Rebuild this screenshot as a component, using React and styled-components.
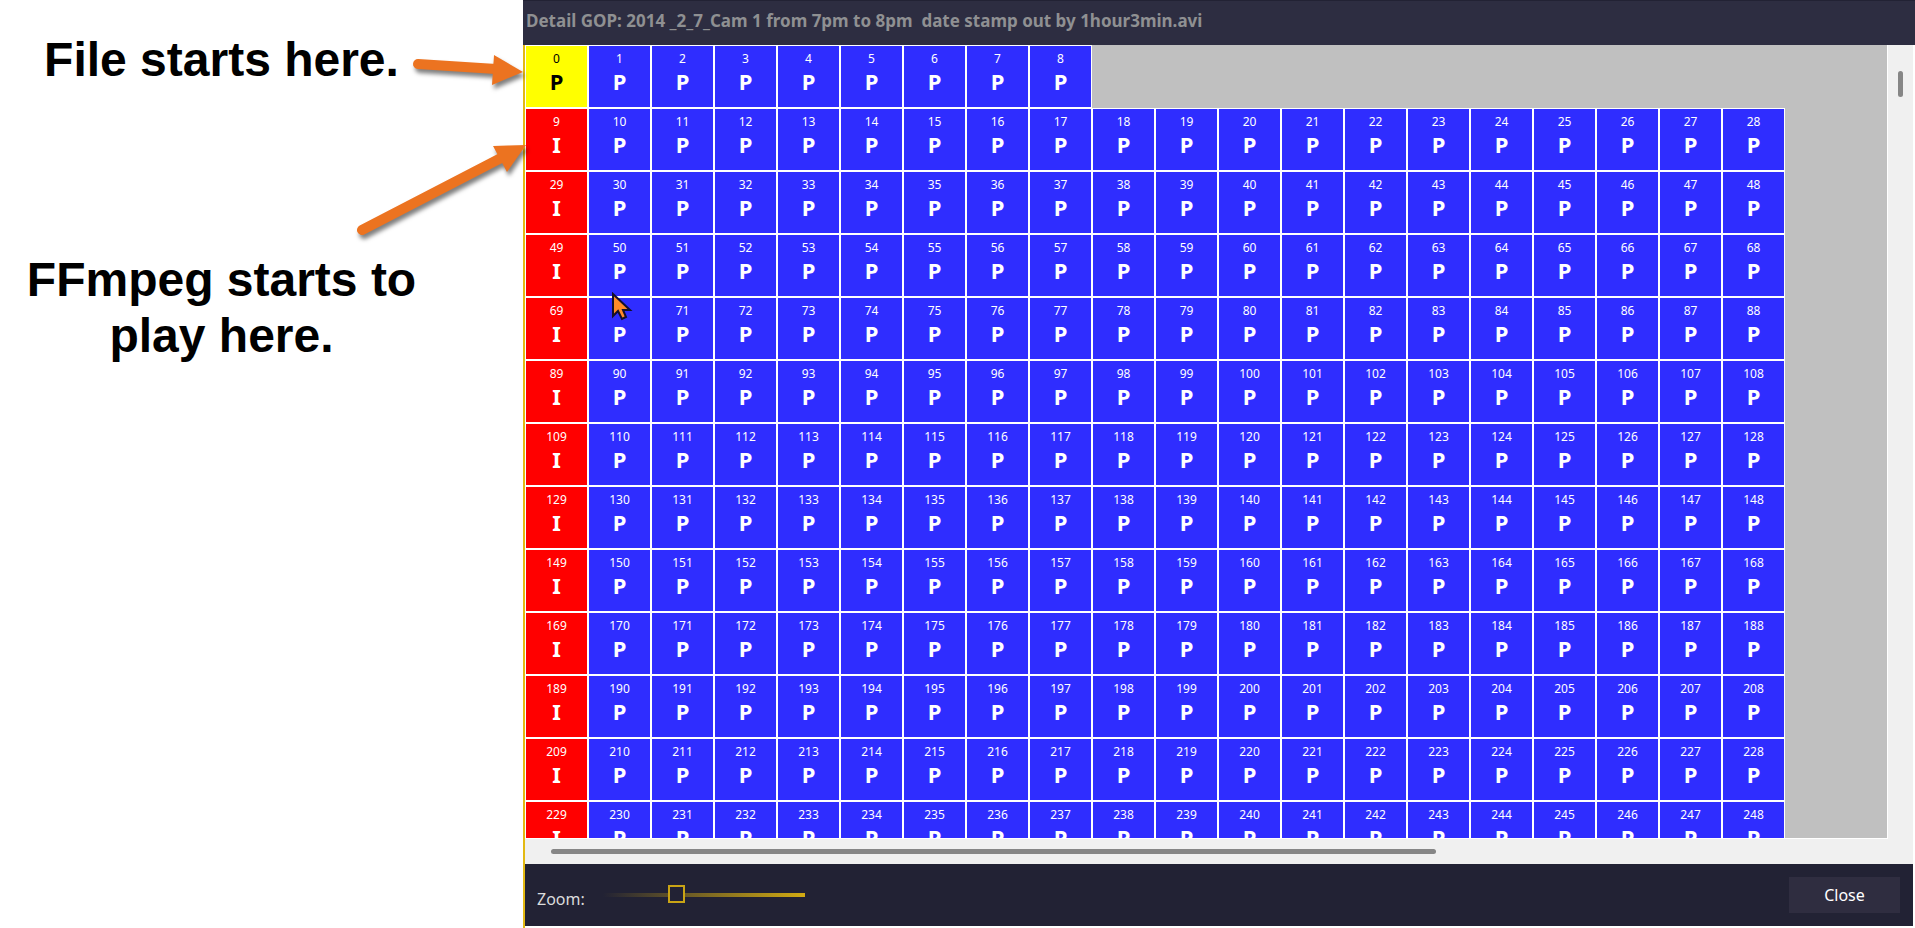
/**
 * -=-=-=-=-=-=-=-=-=-=-=-=-=-=-=-=-=-=-=-=-=-=-=-=-=-=-=-=
 * GOP detail dialog with annotations
 * -=-=-=-=-=-=-=-=-=-=-=-=-=-=-=-=-=-=-=-=-=-=-=-=-=-=-=-=
 */
import React, { useState } from 'react'
import styled, { createGlobalStyle } from 'styled-components'


const FIRST_GOP_LENGTH = 9
const GOP_LENGTH = 20
const GOP_COUNT = 13

// frame whose number sits under the mouse pointer
const HOVERED_FRAME = 70

const buildRow = (start, length) =>
  Array.from({ length }, (_, i) => {
    const number = start + i

    return {
      number,
      type: i === 0 && start > 0 ? 'I' : 'P',
      current: number === 0,
    }
  })

const rows = Array.from({ length: GOP_COUNT }, (_, i) =>
  i === 0
    ? buildRow(0, FIRST_GOP_LENGTH)
    : buildRow(FIRST_GOP_LENGTH + (i - 1) * GOP_LENGTH, GOP_LENGTH)
)

const App = () => {
  const [zoom, setZoom] = useState(35)

  return (
    <Page>
      <GlobalStyle />
      <Notes>
        <Note>File starts here.</Note>
        <Note>FFmpeg starts to play here.</Note>
        <Arrows width="540" height="260" viewBox="0 0 540 260" aria-hidden="true">
          <path d="M418 64L496 69" />
          <polygon points="494,55 523,72 492,85" />
          <path d="M362 230L501 158" />
          <polygon points="493,146 526,145 507,172" />
        </Arrows>
      </Notes>
      <Dialog>
        <TitleBar>Detail GOP: 2014 _2_7_Cam 1 from 7pm to 8pm  date stamp out by 1hour3min.avi</TitleBar>
        <Body>
          <Pane>
            <Frames>
              {rows.map(row => (
                <Row key={row[0].number}>
                  {row.map(frame => (
                    <Frame key={frame.number} $type={frame.type} $current={frame.current}>
                      <FrameNumber>{frame.number !== HOVERED_FRAME && frame.number}</FrameNumber>
                      <FrameType>{frame.type}</FrameType>
                    </Frame>
                  ))}
                </Row>
              ))}
              <Pointer width="22" height="30" viewBox="0 0 22 30" aria-hidden="true">
                <path d="M1 2V24L6 19L10 27L14 25L11 18H18Z" />
              </Pointer>
            </Frames>
            <VerticalTrack>
              <VerticalThumb />
            </VerticalTrack>
          </Pane>
          <HorizontalTrack>
            <HorizontalThumb />
          </HorizontalTrack>
          <Footer>
            <ZoomLabel htmlFor="zoom">Zoom:</ZoomLabel>
            <Slider
              id="zoom"
              type="range"
              value={zoom}
              onChange={e => setZoom(Number(e.target.value))}
            />
            <CloseButton type="button">Close</CloseButton>
          </Footer>
        </Body>
      </Dialog>
    </Page>
  )
}

export default App


const GlobalStyle = createGlobalStyle`
  * {
    box-sizing: border-box;
  }

  body {
    margin: 0;
    background-color: white;
    font-family: 'Noto Sans', sans-serif;
  }
`

const Page = styled.div`
  display: flex;
  height: 100vh;
  overflow: hidden;
`

const Notes = styled.aside`
  position: relative;
  z-index: 1;
  flex: 0 0 523px;
  display: flex;
  flex-direction: column;
  gap: 164px;
  padding: 32px 80px 0 0;
`

const Note = styled.p`
  margin: 0;
  color: black;
  font: bold 48px/56px 'Liberation Sans', Arial, sans-serif;
  text-align: center;
`

const Arrows = styled.svg`
  position: absolute;
  top: 0;
  left: 0;
  fill: #ec7320;
  filter: drop-shadow(2px 4px 2px rgba(0, 0, 0, .5));
  pointer-events: none;

  path {
    stroke: #ec7320;
    stroke-width: 10px;
    stroke-linecap: round;
  }
`

const Dialog = styled.main`
  flex: 1;
  min-width: 0;
  display: flex;
  flex-direction: column;
`

const TitleBar = styled.h1`
  height: 45px;
  margin: 0;
  padding: 0 3px;
  overflow: hidden;
  border-top: 1px solid #222234;
  background-color: #2d2d41;
  color: #8f9092;
  font-size: 17px;
  line-height: 40px;
  white-space: pre;
`

const Body = styled.div`
  flex: 1;
  min-height: 0;
  display: flex;
  flex-direction: column;
  padding: 0 2px 2px 0;
  border-left: 2px solid #e3b913;
`

const Pane = styled.div`
  flex: 1;
  min-height: 0;
  display: flex;
`

const Frames = styled.div`
  position: relative;
  flex: 1;
  min-width: 0;
  overflow: hidden;
  border: solid white;
  border-width: 0 1px 1px 0;
  background-color: #c0c0c0;
`

const Row = styled.div`
  display: flex;
`

const frameColor = ({ $type, $current }) => {
  if ($current) {
    return '#ffff00'
  }

  return $type === 'I' ? '#ff0000' : '#2f2dff'
}

const Frame = styled.div`
  flex: 0 0 63px;
  height: 63px;
  padding-top: 4px;
  border: 1px solid white;
  background-color: ${frameColor};
  color: ${props => props.$current ? 'black' : 'white'};
  text-align: center;
`

const FrameNumber = styled.div`
  height: 18px;
  font-size: 12px;
  line-height: 18px;
`

const FrameType = styled.div`
  font-size: 22px;
  font-weight: bold;
  line-height: 26px;
`

const Pointer = styled.svg`
  position: absolute;
  top: 247px;
  left: 87px;
  fill: #ff8a27;
  stroke: #15102a;
  stroke-width: 2px;
`

const VerticalTrack = styled.div`
  flex: 0 0 25px;
  padding: 26px 10px 0;
  background-color: #f0f0f0;
`

const VerticalThumb = styled.div`
  height: 26px;
  border-radius: 3px;
  background-color: #868686;
`

const HorizontalTrack = styled.div`
  flex: 0 0 25px;
  padding: 10px 21px 10px 26px;
  background-color: #f0f0f0;
`

const HorizontalThumb = styled.div`
  width: 66%;
  height: 5px;
  border-radius: 3px;
  background-color: #868686;
`

const Footer = styled.footer`
  flex: 0 0 62px;
  display: flex;
  align-items: center;
  padding: 0 13px 0 12px;
  background-color: #222234;
`

const ZoomLabel = styled.label`
  width: 66px;
  padding-top: 8px;
  color: #dcdcdc;
  font-size: 16px;
  line-height: 24px;
`

const Slider = styled.input`
  width: 202px;
  height: 18px;
  margin: 0;
  appearance: none;
  background: transparent;

  &::-webkit-slider-runnable-track {
    height: 4px;
    background: linear-gradient(to right, #222234, #d2ab12);
  }

  &::-webkit-slider-thumb {
    width: 17px;
    height: 18px;
    margin-top: -8px;
    appearance: none;
    border: 2px solid #c9a415;
    background-color: #222234;
  }
`

const CloseButton = styled.button`
  width: 111px;
  height: 36px;
  margin-left: auto;
  padding: 0;
  border: 0;
  background-color: #2f2d40;
  color: white;
  font-family: inherit;
  font-size: 16px;
`
